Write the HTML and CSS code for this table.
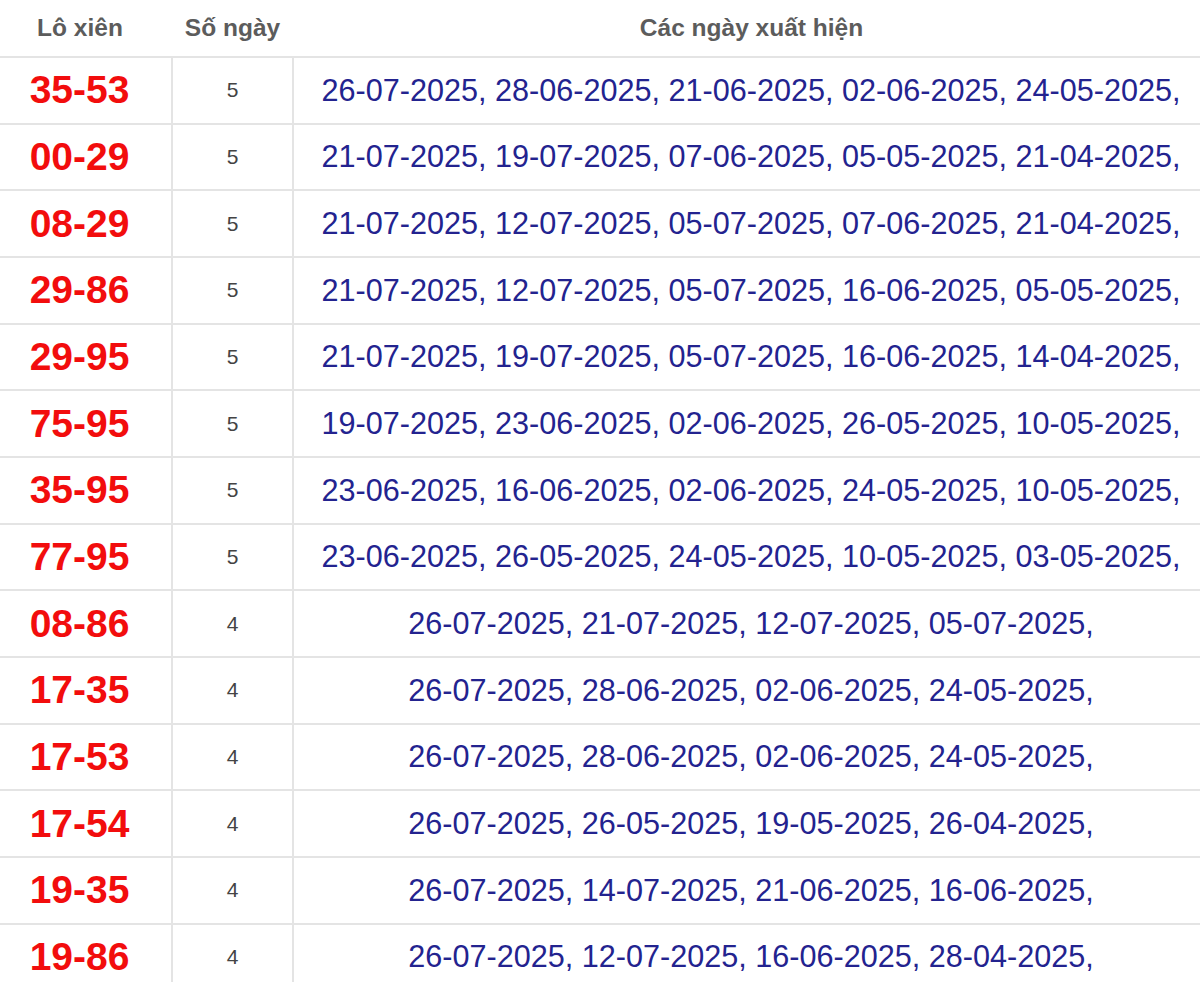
FILE: index.html
```html
<!DOCTYPE html>
<html lang="vi">
<head>
<meta charset="utf-8">
<title>Lô xiên</title>
<link rel="stylesheet" href="styles.css">
</head>
<body>
<table class="xien">
  <colgroup>
    <col class="c1">
    <col class="c2">
    <col class="c3">
  </colgroup>
  <thead>
    <tr class="head">
      <th class="h1">Lô xiên</th>
      <th>Số ngày</th>
      <th class="h3">Các ngày xuất hiện</th>
    </tr>
  </thead>
  <tbody>
    <tr><td class="pair">35-53</td><td class="cnt">5</td><td class="dates">26-07-2025, 28-06-2025, 21-06-2025, 02-06-2025, 24-05-2025,</td></tr>
    <tr><td class="pair">00-29</td><td class="cnt">5</td><td class="dates">21-07-2025, 19-07-2025, 07-06-2025, 05-05-2025, 21-04-2025,</td></tr>
    <tr><td class="pair">08-29</td><td class="cnt">5</td><td class="dates">21-07-2025, 12-07-2025, 05-07-2025, 07-06-2025, 21-04-2025,</td></tr>
    <tr><td class="pair">29-86</td><td class="cnt">5</td><td class="dates">21-07-2025, 12-07-2025, 05-07-2025, 16-06-2025, 05-05-2025,</td></tr>
    <tr><td class="pair">29-95</td><td class="cnt">5</td><td class="dates">21-07-2025, 19-07-2025, 05-07-2025, 16-06-2025, 14-04-2025,</td></tr>
    <tr><td class="pair">75-95</td><td class="cnt">5</td><td class="dates">19-07-2025, 23-06-2025, 02-06-2025, 26-05-2025, 10-05-2025,</td></tr>
    <tr><td class="pair">35-95</td><td class="cnt">5</td><td class="dates">23-06-2025, 16-06-2025, 02-06-2025, 24-05-2025, 10-05-2025,</td></tr>
    <tr><td class="pair">77-95</td><td class="cnt">5</td><td class="dates">23-06-2025, 26-05-2025, 24-05-2025, 10-05-2025, 03-05-2025,</td></tr>
    <tr><td class="pair">08-86</td><td class="cnt">4</td><td class="dates">26-07-2025, 21-07-2025, 12-07-2025, 05-07-2025,</td></tr>
    <tr><td class="pair">17-35</td><td class="cnt">4</td><td class="dates">26-07-2025, 28-06-2025, 02-06-2025, 24-05-2025,</td></tr>
    <tr><td class="pair">17-53</td><td class="cnt">4</td><td class="dates">26-07-2025, 28-06-2025, 02-06-2025, 24-05-2025,</td></tr>
    <tr><td class="pair">17-54</td><td class="cnt">4</td><td class="dates">26-07-2025, 26-05-2025, 19-05-2025, 26-04-2025,</td></tr>
    <tr><td class="pair">19-35</td><td class="cnt">4</td><td class="dates">26-07-2025, 14-07-2025, 21-06-2025, 16-06-2025,</td></tr>
    <tr><td class="pair">19-86</td><td class="cnt">4</td><td class="dates">26-07-2025, 12-07-2025, 16-06-2025, 28-04-2025,</td></tr>
  </tbody>
</table>
</body>
</html>
```
FILE: styles.css
```css
html, body {
  margin: 0;
  padding: 0;
  background: #ffffff;
  overflow: hidden;
}

body {
  font-family: "Liberation Sans", Arial, sans-serif;
}

.xien {
  width: 1200px;
  border-collapse: collapse;
  table-layout: fixed;
}

.c1 { width: 172px; }
.c2 { width: 121px; }
.c3 { width: 907px; }

.head {
  height: 57px;
}

.head th {
  font-size: 24.5px;
  font-weight: bold;
  color: #5c5c5c;
  text-align: center;
  vertical-align: middle;
  padding: 0;
  border-bottom: 2px solid #e4e4e4;
}

.head .h1 {
  padding-right: 12px;
}

.head .h3 {
  padding-left: 10px;
}

tbody tr {
  height: 66.67px;
}

tbody td {
  border-bottom: 2px solid #e4e4e4;
  border-left: 2px solid #e4e4e4;
  text-align: center;
  vertical-align: middle;
  padding: 0;
}

tbody td.pair {
  border-left: none;
  font-size: 39px;
  font-weight: bold;
  color: #f20d0d;
  padding-right: 12px;
}

tbody td.cnt {
  font-size: 21px;
  color: #444444;
}

tbody td.dates {
  font-size: 30.6px;
  color: #23238f;
  padding-left: 8px;
  white-space: nowrap;
}
```
